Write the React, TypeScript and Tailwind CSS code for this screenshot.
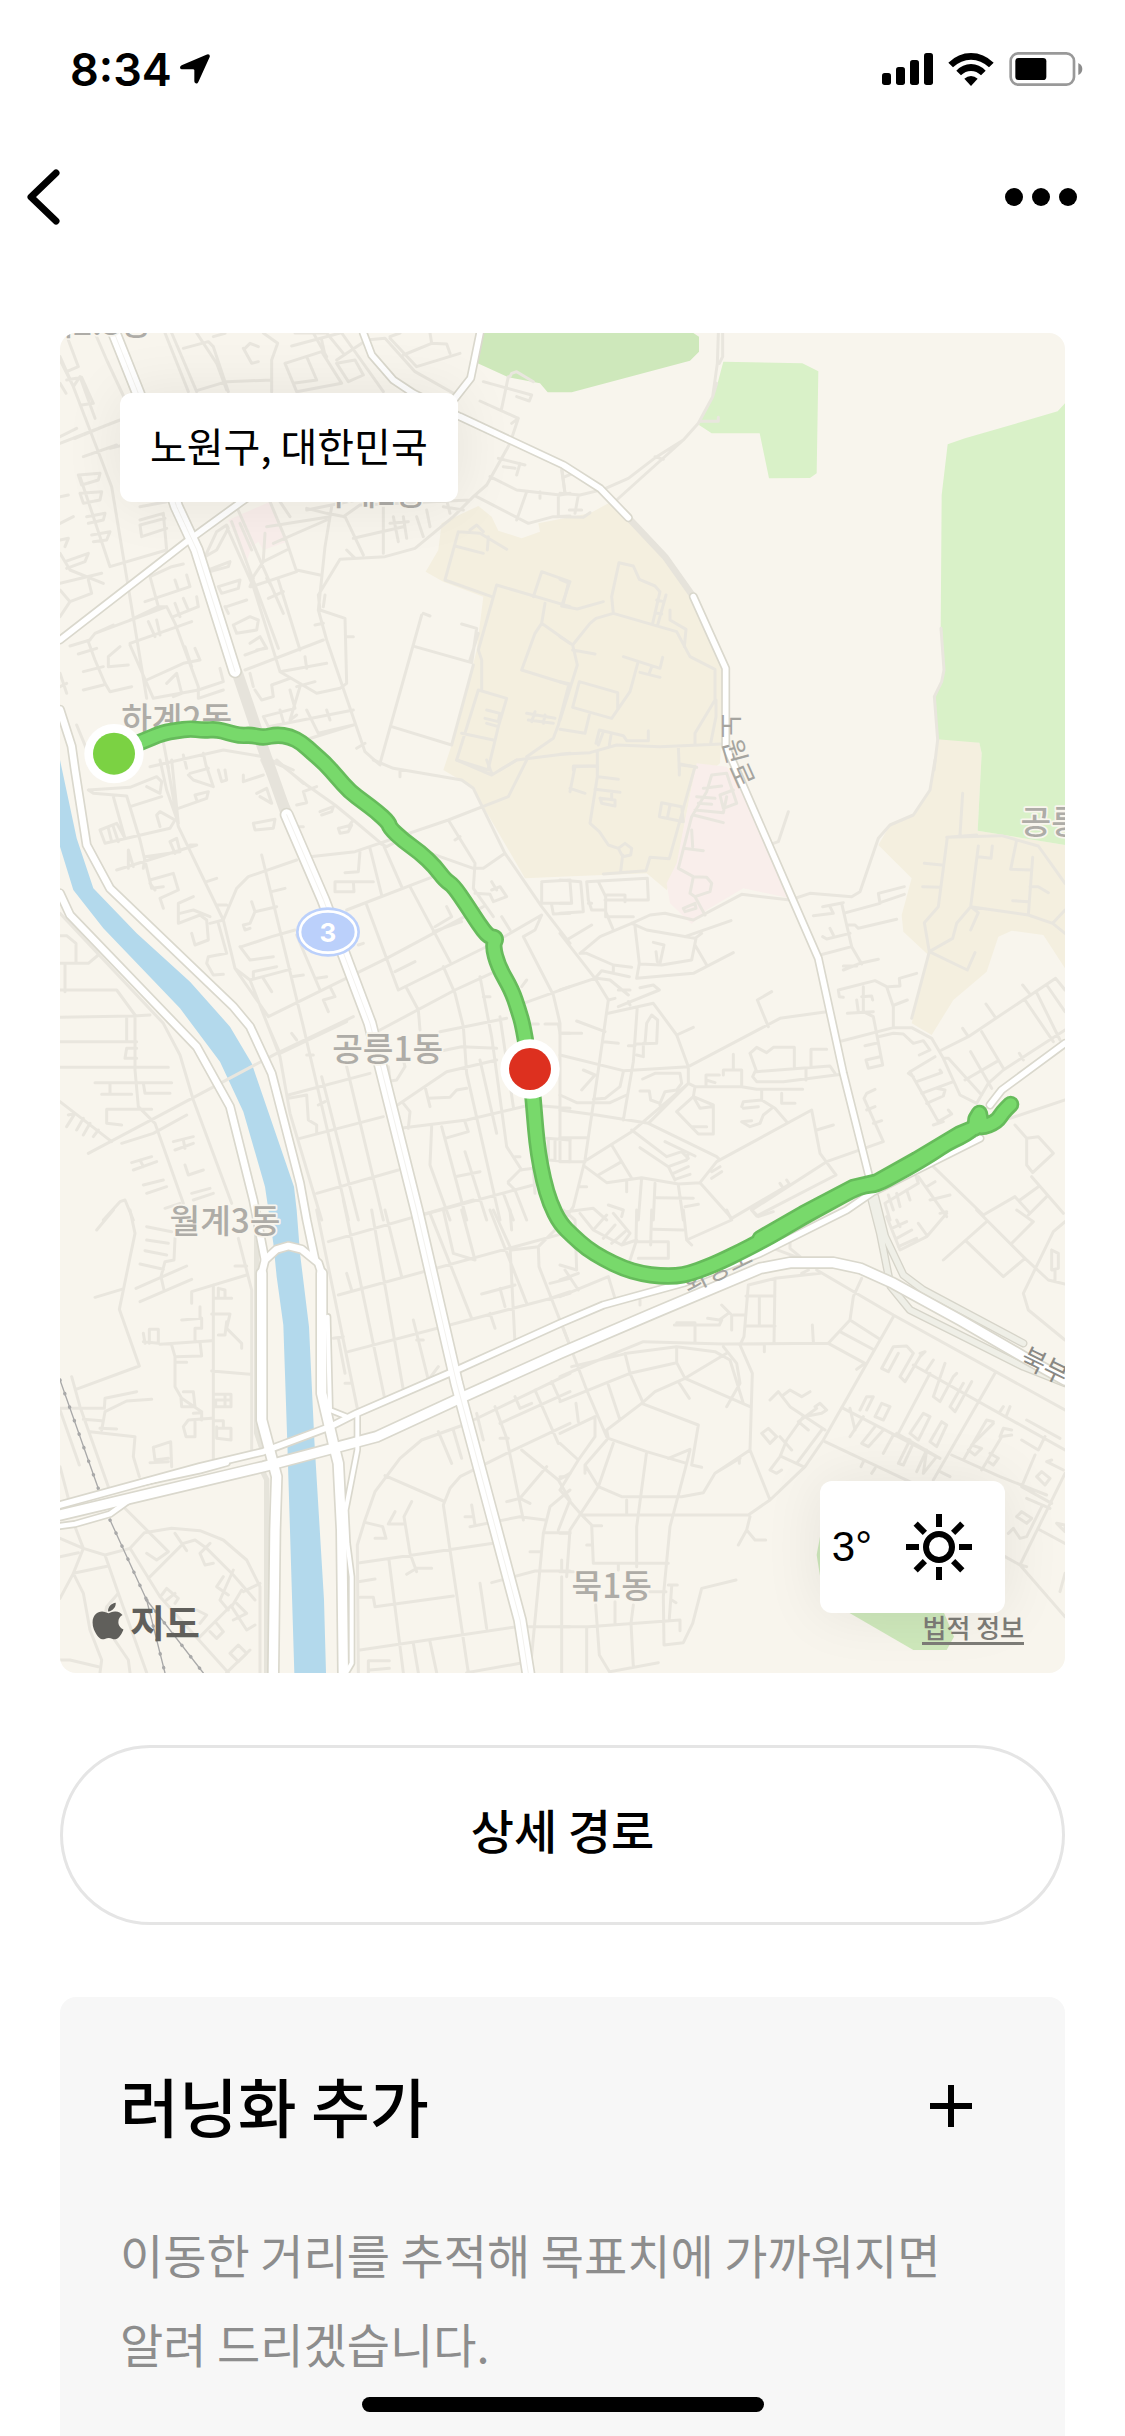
import { FaApple } from "react-icons/fa";

const BLOCKS = [
  {
    id: "hagye",
    x: -30,
    y: -39,
    d: `M30 110L70 200L185 500L290 1135M55 60L85 140L50 155M30 120L70 200L90 170L135 295M30 190L48 220M50 180L95 172L130 250L95 255M135 39L170 120L310 420
    M345 39L415 215M365 39L440 215M400 85L475 65L490 80L535 215M440 39L500 130L530 210M490 50L525 40M440 212L530 185L665 180M640 39L683 70L665 120V215
    M585 85L600 70L625 80M580 85L605 130L625 125M725 78L870 39M790 39L830 110M815 60L825 105M705 130L815 95L875 190L740 215L705 130M770 110L800 180L730 190M735 39L830 39L880 100M860 130L915 120L940 165L895 185L860 130M875 39L1000 215M860 120L905 90L950 60L1005 55L1095 155L1220 225
    M1020 55L1100 140L1230 100M1060 105L1145 70L1190 72L1200 100M1140 39L1145 70M1020 50L1050 39
    M1380 170L1385 160L1400 155L1450 185M1300 185L1445 225L1438 243L1400 230M1375 170L1355 265M1290 243L1405 295L1380 370L1310 495L1270 530L1210 590L1095 685L1005 710L870 718L805 825L810 870L885 895L890 1090L870 1105L800 1120L690 1055M1405 295L1385 310
    M30 370L210 300M30 350L80 325M75 355L160 320M100 410L200 375M180 385L240 370M85 465L150 460L145 480L95 495L85 465M90 520L155 515L150 540L100 550L90 520M90 470L180 740L350 690L340 580L270 600M30 530L55 525M30 610L70 590M30 660L55 655L45 680M270 560L350 545M345 595L270 615L275 650L350 625M110 590L165 580L160 600L115 610M125 645L180 635L170 660L130 665M45 725L115 700L105 725L50 745M30 700L60 750L160 790M30 790L155 760M115 780L125 820L60 845L30 890M60 845L30 810
    M300 770L365 740L400 732M300 770L325 860L240 900M285 845L420 800L410 765M375 780L385 810M325 860L350 860L375 910L445 1100V1135M240 970L425 905M135 940L350 860M115 965L135 940L190 915M60 978L120 960M85 1002L140 985M100 1055L160 1040M115 965L135 1020L165 1090L180 1115L245 1100M175 1040V1010L210 980M175 1040L235 1035M100 1110L160 1095M240 975L310 1135L445 1110M295 905L315 950M320 900L330 945M290 1080L400 1030L450 1020L435 985M405 980L425 1040M350 1090L380 1060L395 1120L370 1130M445 1110L520 1085L510 1045M445 1135L520 1110M370 890L445 860M375 850L390 890M400 835L415 870M440 830L445 860
    M30 1060L50 1120M30 1100L50 1090M80 1215L115 1300M335 1240L355 1345M300 1340L520 1290L640 1310L730 1350M400 1305L410 1345M460 1300L470 1345
    M465 710L500 635L530 615L535 625L500 690L465 710M475 750L540 725L535 740L480 755M530 620L610 800L690 1055M545 605L685 985M560 560L700 880M605 690L570 610M605 800L740 755L710 665L660 545M610 770L640 725L710 690M505 800L570 780L565 805L515 820L505 800M530 860L590 840M525 860L535 880M550 915L600 890L625 900L620 930L560 940L550 915M600 970L630 950L650 985L620 990M610 775L600 800M585 1005L640 985M690 1010L820 960M585 1050L820 960M650 775L665 800M655 835L700 815M685 780L750 990M740 750L810 765M645 640L640 720M650 620L840 590M670 670L830 600M690 545L720 590M770 565L830 580L885 590L940 705M845 560L825 680L805 870L830 960L945 1295L990 1335M820 860L825 825M795 915L820 910M890 950H910M690 1055L830 1030M765 1010L770 1045M740 1100L795 1085M615 1110L635 1140L670 1130L665 1095L720 1075M600 1060L610 1100M720 1110L735 1165L725 1130M750 1100L720 1200L740 1185M640 1190L735 1165M640 1190L655 1220L910 1170M690 1170L700 1205M770 1170L805 1240L910 1215M830 1170L840 1200M765 1260L910 1215M920 1285L945 1270M770 570L920 540M880 590L930 555L1260 540M910 655L1060 620M1000 540V700M890 690L915 715M1030 590L1045 665M1060 590L1070 655M1100 590L1120 650M1020 610L1075 605M1130 570L1140 620M1180 560L1240 570M1190 540L1200 580
    M1320 470L1400 510L1530 525L1560 520M1280 530L1435 610L1510 590L1560 588M1430 515L1400 600M1470 515V535M1345 415L1425 435M1360 440L1395 445M1410 430L1400 465M1525 530V590M1535 440L1545 520
    M1120 880L1140 888M1115 885L990 1330M1095 980L1265 1028L1280 925L1235 912M1270 1035L1205 1275L1025 1220M1285 940L1260 1020
    M1225 635L1290 640L1370 688M1225 635L1185 780L1325 830M1215 678L1300 700M1260 630L1280 615L1300 635M1315 650L1312 690M1340 795L1560 860M1340 795L1285 990L1295 1020V1110M1450 830L1475 755L1560 785M1555 790L1540 850M1485 850L1475 910L1560 970M1475 910L1455 940L1415 1050L1560 1095M1555 1100L1525 1215M1285 1110L1370 1135L1345 1220L1310 1210M1285 1110L1220 1320L1315 1350M1235 1240L1330 1260M1345 1220L1315 1345M1310 1170L1350 1180L1345 1205L1305 1195M1430 1180L1515 1195M1435 1200L1510 1210M1455 1175L1445 1205M1485 1185L1480 1210M1350 1350L1400 1320L1560 1300M1430 1310L1510 1255L1525 1215`,
  },
  {
    id: "nowon",
    x: 1500,
    y: -39,
    d: `M475 39L472 130L458 230L415 310L370 360L170 540M488 39V110L478 130M470 190L458 230M370 360L290 410L205 475L130 508L60 525L0 520M285 410L310 418M420 304H475V292
    M5 450L15 520M15 470L40 460M55 525L45 580M28 570H65M0 590L70 592L90 578
    M0 778L28 790L5 858L52 867L130 845M155 830L177 728L220 738L238 778L285 798L300 815L278 910M155 830L160 880L108 895L90 910L38 975L0 950M160 880L350 935L390 1010L465 1048V1140L405 1240V1270M318 825L293 915M290 840L310 845M285 878L305 882M330 870V900L378 928L373 980M38 990L105 1002M38 975L52 1035L0 1200M190 1010L300 1045L308 1012M240 1057L300 1072M275 1040L268 1060M233 1030L210 1115L155 1195L38 1162L58 1085L173 1118V1165M0 1085L30 1092M88 1185L75 1240L0 1228M468 1140V1190L452 1270M108 1270L118 1230L190 1247L200 1262H265V1232M115 1275L130 1235M148 1275L153 1245M0 1303L90 1298L170 1275L300 1280L485 1272M112 1295V1350M40 1350V1340L112 1338M355 1280L358 1350M360 1332L410 1342
    M1143 925L1152 1050L1145 1085L1123 1130L1133 1260L1122 1350`,
  },
  {
    id: "gongneung-west",
    x: -30,
    y: 1281,
    d: `M115 90L240 82L320 50L335 65L330 100L290 80M115 90L130 100L230 108L270 240L305 385L340 380M190 110L225 235M240 140L335 110M150 210L200 190L225 235M150 210L165 250L360 205L375 180L330 155L320 165L330 200M175 205L185 245M190 200L205 245M350 0L385 200L520 480L555 625L655 770M365 0L385 190M330 0L350 90L385 190M385 145L470 115L475 95L435 105L440 120M420 40L475 25M415 45L430 60L490 80L470 20M505 30L515 65L530 60L525 30
    M200 330L440 255M280 325L285 290L390 275L380 235L360 245L375 280M235 325L235 270L250 320M420 255H440M470 365L500 355M300 360L370 340L385 390L330 415L340 445M300 370L315 390M430 410L385 430V490L450 465L470 480L475 540L435 555L425 520M390 460L430 450L480 470M480 490L520 480M500 435H530M505 490L530 580L475 590L470 610L490 645L520 643M520 480L560 385L595 350L740 300M555 625L600 660L655 800L690 880
    M635 0L705 150M650 0L720 150M665 5L700 20L770 75L855 135L910 180L1005 260M680 0L760 70M580 65L640 45M580 45V65M620 100L650 85L665 130L630 110M610 190L675 178L670 205L615 210L610 190M740 135L770 128L760 95L800 80M745 200H760M810 155L850 140L845 155L815 165M865 205L905 195L895 215L870 220L865 205M910 180L895 200
    M780 290L915 275L1195 180L1375 110L1430 0M930 275L925 335L885 338M855 365H910L912 395H855V365M910 365H970M960 265L995 405M1000 255L1055 380M990 250L1010 260L1080 225M1195 180L1275 310L1270 385L1330 470M1215 240L1230 230M1100 265L1270 325H1300L1365 280M1275 400L1320 403L1330 425L1370 410L1350 380L1325 390M1325 365L1340 390M890 450L1150 350M970 0L1030 25L1235 60L1270 85L1365 280L1475 440L1560 550M1050 30V50M1310 0L1325 40M1220 0L1325 45L1400 0M1475 365L1560 360M1475 370V430L1560 430M1505 435L1510 462L1560 460
    M635 285L760 800L895 1380M575 560L665 530L735 510M605 425L615 455L680 440M615 455L600 490L580 495L585 510L600 505M570 560L600 600L670 590M665 395L705 385M610 635L680 620M600 660L720 628M640 655L665 695M610 635V650M725 650L760 645M655 770L1010 595L1300 440M740 525L810 690M800 655L830 650M840 680L855 710L820 720L835 755M940 550L925 555M950 435L1045 690M1035 635L1095 605M1080 380L1200 605M1150 515L1235 485M1155 500L1205 470L1190 440M1045 690L1320 555L1475 465L1455 510L1420 530L1510 705L1530 790V1200M1355 470L1380 510M1070 685L1105 750L1110 810M990 810L1215 690L1335 635M1180 620L1215 700L1240 800L1250 940L1350 1380M1290 650L1325 830L1370 1160L1415 1230M1300 710H1320M1420 730L1560 680M1430 660L1415 680M1350 770L1390 1040M1170 815L1370 775M1115 885L1235 860L1340 865M1440 792H1465M1485 792H1525L1530 820H1560
    M520 965L680 880L910 770M690 880L890 785M725 820L740 840M770 885H790M655 800L690 890L720 1060L815 1380M715 1005L960 940M815 950L925 1380M890 920L1000 1380M715 1015L770 1005L775 1080L800 1095V1120M805 1035L825 1025M750 1135L1000 1070M800 1300L1045 1230M1010 965L1040 960L1065 920L1060 900M1015 920L1020 960M1035 1040L1190 935L1340 900M1125 980L1140 1040M1135 1015L1200 1012L1220 990L1250 985M1060 1030L1080 1055L1075 1105M1050 1105L1250 1080L1440 1035L1560 1045M1145 1100L1140 1215L1200 1380M1175 1100L1250 1380M1245 1085L1255 1115L1185 1135M1245 1175L1310 1380M1215 1250L1290 1235M1115 1365L1450 1275M1290 900L1340 1120M1375 1265L1410 1230L1450 1225L1455 1300M1375 1270L1395 1290L1430 1380M1490 1135L1560 1140M1495 1140V1200L1560 1205M1515 1140V1200M1395 1190H1410M1360 1300L1390 1380
    M30 460L340 790L390 885L430 1020L545 1330M30 527H50L78 550V605M30 610H115L145 585M45 610V695M30 690H200L255 765M30 772L250 768L300 765M230 770V840M255 770V930L265 1040L315 1090L400 1330M30 845H260M225 895L230 865H260M225 895H260M30 922H355M135 968H365M155 1003H245M180 970V1000M280 970L285 1000H360M30 1025L185 1145M55 1065L75 1060L50 1100M100 1075L80 1110M120 1090L100 1125M145 1110L130 1130M115 1180L520 965M170 1048H305M170 1048V1090L215 1095M215 1150L310 1120L410 1065M370 1145L430 1130M375 1170L430 1150M400 1140L405 1165M245 1208L305 1190M250 1230L320 1205M270 1200L280 1220M405 1215L415 1245L460 1230M280 1275L340 1260M290 1300L350 1280M425 1300L480 1285M430 1320L490 1300M345 1345L390 1330M160 1380L210 1325L225 1320L250 1380`,
  },
  {
    id: "gongneung-east",
    x: 1500,
    y: 1281,
    d: `M40 18H112V50L90 190L118 215L145 255L175 265L195 250L215 265L212 285L188 290L175 265M188 285L182 335M115 50L175 58M105 88L180 97M120 115L165 120V138L125 130L120 115M155 97V118M30 95L45 20M30 85L75 100M130 342L258 332L270 292L328 296L405 20L358 14V45M305 128L365 140L370 185L298 170L305 128M330 135L322 175
    M455 45L500 40L530 130L490 145L480 105L520 90M455 45L440 95L395 170L355 325L400 350L440 352L455 370L450 395L405 410L390 400L400 350M410 110L465 115M430 85L485 78M415 130L455 133M405 150L490 158L500 110M400 165L490 188M370 265L430 272M395 210L398 260M405 410L435 465M370 445L405 430L408 445L375 455L370 445
    M0 360L62 365L70 455L0 460M30 365L35 430H0M80 365L262 355L265 420H135M80 365L85 420L95 450H135L158 505M115 365L137 410V470M140 405H195V425M145 470H220M85 430L95 430
    M0 520L105 655L145 720L115 930L75 1200L40 1340L20 1370M20 540L95 495M60 580L120 530L215 490L270 465L315 460L400 480L545 403L690 420L750 400L875 410L900 395L955 235L990 195L1060 165L1110 90L1125 0M225 500L238 610L230 655L400 640L520 578M215 490L260 510L405 535L425 520M375 530L513 482M408 535L395 600L305 615L240 612M405 555L440 615M280 547L312 555L300 610M288 575L292 605M60 580H80L160 615L215 622M0 690L105 655L125 632L208 650M160 615V635M110 655L150 660L205 705M175 690H210M240 683L280 675L298 690L175 740M210 735L205 725M145 760L280 730L350 825L385 920V970L265 1090M50 783L135 815M130 845L175 850M0 820H65M145 720L165 715M350 825L400 802M232 740L220 905L190 1080M255 850L260 790L275 765L293 780L290 850L230 852M250 850V890L230 885M205 857H225
    M0 885L190 932L385 920L660 775L800 755M625 800L592 720L635 695M0 1005L50 1028H150L200 1005M100 1018L135 1015L180 980L190 935M70 930L105 945L65 990M0 1050L110 1065L265 1090L470 1190L480 1200M240 993H268L272 1020L300 1030L315 995L350 990L365 970L360 940H285L248 957M300 1035L305 1040M385 970L405 980H545L590 988H728M438 975V945H478M438 960L465 968M490 945V930H545V975M520 930V883M570 880L590 862L620 878L640 862H703V920M570 880L590 935L810 918L825 940M585 935L578 950L590 965H670L845 943M753 920V868H800M738 925V960M605 990V1020M545 1040L550 1025L605 1020L645 1045L680 1085M665 1000V1030H705M635 1045L610 1065L600 1090L570 1100L545 1085L575 1082M550 1045L595 1040M350 1055L400 1010L460 1035V1122H415L350 1055M405 980L400 1010L420 1045L455 1040M395 1100H440M80 1200L215 1115L385 970M215 1110L320 1190M240 1163L325 1220L380 1200L385 1180M320 1190L365 1175L385 1195M315 1145L405 1188M325 1220L345 1260M340 1240L385 1220M345 1258L390 1243M0 1133H80M30 1135V1205M0 1205H75M75 1220L140 1268L245 1253L355 1272L420 1268L470 1205L755 1050L780 1180L828 1245L590 1368L575 1350L800 1205L970 1145L912 1015L920 1000L945 988M155 1155L215 1255M115 1245L185 1205M420 1268L515 1375M455 1255L485 1235M455 1235L480 1220M770 1110L820 1095M920 1050L945 1040M940 1090L965 1082M515 1375L685 1275M660 1270L670 1285M680 1260L690 1275M245 1253L235 1380M285 1270L280 1380M290 1313L400 1315M355 1275L370 1380M375 1340L415 1333M200 1265V1295M20 1355L100 1345L140 1380M145 1335L190 1350L185 1370M60 1280H80
    M640 250L655 245L685 155M780 585L875 560L905 612M845 430L875 560M788 440L850 428M760 467L820 460L810 440M858 458L960 430L955 400L1033 380M960 428L1033 403M865 495H885L895 505L1010 478M788 530L800 537L870 520M810 505L820 525M850 630L900 610L955 598M850 618H890
    M835 690L945 662L980 680L1000 740V800M835 690L838 710L850 712M910 680V755M862 760L940 755M905 710L935 708L938 720M985 680L1020 678L1018 655L1070 640M1003 735L1042 720M890 720L895 755M910 755L940 770L968 915L925 925L918 900L960 890M915 857L955 848M845 843L1000 803H1055L1115 835L1150 895L1200 1005L1250 1030M955 830L1000 820L1030 822L1060 850L1090 842L1110 870L1078 885
    M1208 100L1200 225M1250 225L1162 232L1135 440L1093 488L1108 575L1055 775M1160 232L1325 227L1435 258L1515 370M1255 258L1232 440L1255 458L1232 510M1255 290L1293 295L1297 258M1370 240L1352 328L1413 330M1418 292L1405 465M1093 310L1145 315M1088 380L1140 382M1410 380H1435L1465 398M1358 422L1405 425M1232 440L1405 465L1478 490L1515 520M1478 490L1515 450M1232 440L1190 490L1178 535L1108 575L1222 630L1245 578
    M1145 870L1225 830L1487 655L1515 690M1208 805L1225 830M1278 732L1308 775M1388 675L1408 700M1265 815L1330 925M1395 720L1480 845M1430 698L1500 840M1460 675L1515 755M1515 810L1330 930L1285 970L1250 1030M1378 880L1390 900M1232 875L1295 985M1215 960L1310 905M1150 895H1165L1265 1005M1050 935L1125 890M1050 935L1135 1085L1175 1062L1165 1050M1070 965L1145 938L1140 930M1085 1000L1180 965M1100 1030L1150 1008L1155 990L1130 985M1120 1095L1150 1085M1045 940L1060 950
    M1260 1105L1515 1020M1365 1095L1400 1135V1215L1418 1238L1480 1180L1435 1130L1400 1135M1120 1220L1270 1365L1365 1310L1410 1360M1415 1250L1510 1360M1380 1320L1435 1280M1405 1365L1460 1310M975 1330L1075 1270L1065 1240M975 1330L990 1380M985 1305L1000 1350M1010 1300L1020 1340M1040 1290L1050 1320M1075 1250L1160 1370M1100 1280L1125 1265M1110 1320L1170 1305M1140 1360L1160 1355`,
  },
  {
    id: "wolgye",
    x: -30,
    y: 2631,
    d: `M190 0L140 60M240 0L255 70L208 298L268 468L78 538M135 262L215 238M290 50L365 65M290 90L355 100M285 122L350 135M270 162L340 178M375 85L372 150L345 155M258 235L410 168M270 275L425 208M345 155L333 200L342 240M565 85L605 240V720M555 168H590M425 280V245L590 195M490 225V750M505 235L525 240V265L490 265M505 235V265M520 265H545M485 312H540L530 355L575 400V415M505 375H525L530 335M395 330L455 325V355L435 355V395M450 290V325M280 395L325 400V358H298V400M280 370L285 400M330 403L485 392M365 405L375 440V530L395 565L455 605M375 440L455 438L450 395M375 457H410M485 483L600 493M400 545H430L435 590L395 590L393 565M495 553H543V590H497V570H543M525 553V590M415 630L485 625M430 610L455 608V630M415 630L400 650L408 680H435V635M495 632H520V655M500 650V685L543 690V655H500M310 712L362 695L365 770M310 712L315 750L355 745M300 758L355 755
    M65 500L90 590L175 830M30 595H163M100 628L155 632M163 595L165 565L260 545M155 660L165 605L230 573L305 568M150 655L200 657M120 665L255 680L250 740L268 800M30 600L88 765M30 770L55 865
    M215 885L355 1025M30 985L100 1015L165 1035L240 1015L283 968L365 955L450 962L520 990L590 1050L630 1130V1388M75 950L100 1015L70 1090L30 1165M30 1040L85 1028M70 1090L175 1068M165 1035L205 1150L290 1388M240 1015L330 1160L535 1388M295 1105L400 1000L435 990L470 1015L550 1095L615 1170M375 970L410 1022M290 1030L320 1050L355 1025M480 1000L450 1030L465 1065L490 1060M550 1080L510 1170L535 1200M520 1100L500 1130L535 1155M575 1140L545 1190L590 1260L615 1245M560 1180L590 1210L550 1230M580 1145L630 1120M335 1155L350 1135L385 1165L375 1180M350 1170L375 1150M440 1200L470 1215L450 1240M445 1285L545 1185M500 1240L520 1265L500 1285L480 1265M540 1330L565 1305L590 1330L565 1355L540 1330M530 1388L600 1320M70 1090L100 1150L120 1260L155 1350L150 1388M205 1150L170 1190L160 1240L235 1350L240 1388M30 1350H60L145 1370
    M800 0L925 610M835 95L1270 -30M865 255L1560 65M895 425L1560 250M880 -30L1005 570M965 0L1060 540M890 190L905 240M1005 0L1055 200M1140 10L1265 325M1090 330L1135 510L1165 470M1100 390H1120M1180 0L1210 130L1275 150M1235 0L1275 150M1320 0L1430 280M1330 0L1380 110L1395 400M1380 0L1385 60M1295 252L1395 225M1350 235L1365 290M1320 310L1335 355M1385 120L1465 110L1515 60M1465 110L1467 170L1555 395M1500 220L1560 205M1500 265L1560 245M850 385L880 380M865 385L885 490M885 520H905
    M925 1388L922 1005L945 930L975 845L1050 745L1115 690L1240 645L1560 490M1005 797L1180 873M1165 665L1205 760M1210 660L1235 745M1280 610L1300 690M1560 640L1370 730L1230 800L1200 835L1180 885L1255 1388M1085 875L1062 920L1080 1030L1100 1085M1015 942H1062M1015 942L1035 905M945 937L998 950L1008 985H975M930 1058L1330 1000M925 1115L975 1107M930 1162H970L975 1190L1210 1158M1070 1093L1100 1075H1145M1017 1050L1060 1388M930 1320L1400 1250L1560 1250M955 1388V1352H1018M960 1380L1018 1375M1090 1300L1105 1388M1140 1295L1160 1388M1250 1388L1410 1360M1290 1120L1310 1255M1325 1118L1455 1083H1560M1265 885L1275 945M1245 920H1265M1260 950L1410 920L1485 930M1335 590L1370 685L1420 930M1350 640L1560 545M1395 560L1410 595L1445 580M1455 540L1525 700M1505 515L1530 570M1370 875L1410 865L1490 770M1410 865L1440 880M1415 720L1525 810L1560 790M1525 810L1560 870L1525 960M1560 840L1500 890L1480 970L1440 1388M1480 968H1560M1440 1025H1475M1535 1050V1080M1350 685H1375`,
  },
  {
    id: "muk",
    x: 1500,
    y: 2631,
    d: `M10 0L45 30L50 180L0 165M15 180L55 240M0 260L145 200L165 265M0 210L55 190M230 0L228 95L210 150M228 95H325V145H235M275 0L272 105M280 58L370 60M370 0L380 90L395 105M380 90L515 30L500 0M60 10L100 60L185 105L210 70L160 10M100 60L140 15M130 85L165 45M185 105L230 90M155 100L195 65M575 0L595 20L640 5
    M10 355L80 540L140 680M0 500L140 440L250 395L490 402L805 400L870 330L880 260L905 205M240 270V285M35 470L200 430L350 410L465 425L510 450L550 580M0 575L135 520L210 490L350 458L350 415M195 430L210 490L250 580M145 525L180 630M350 458L375 505L570 590M490 410L530 460L540 520L500 590M500 430L375 505L285 545L245 580L140 660L145 685L260 725L380 760L390 720M245 580L415 645L395 765L425 772M355 515L388 565M325 745L390 718M0 670L105 620V680L55 750L0 840M55 635L48 580M260 725L230 950V1070M380 760L330 950L310 1160L312 1305L370 1298L398 1240L425 1135L528 1110M160 700L115 830L30 960L20 1100M75 765L115 830L185 860H365L430 848L465 790L570 720L630 870L735 770L790 690L1000 320M140 690L75 765L75 790M0 700L55 750M0 800H15M0 840L65 915H565L630 870M65 915L95 945L100 1060H325M95 947H125M80 1005H95M200 870V915M570 920L560 960L585 990H617M560 960L535 1005M0 1250H85L360 1230V1262M175 1060V1080M0 970H30M0 1085H40M107 1185L118 1335L150 1388M165 1175V1240M220 1185L213 1240L220 1370M80 1255V1388M150 1385L295 1358M5 1100V1388M270 1145H318M325 1125H352M335 1130L328 1225M335 1170L348 1178
    M540 405L577 490L570 720M540 405L552 380L565 225L645 205L780 190M558 258H645M598 260V345M645 205L642 400M555 348H645M520 315H555M485 285L515 315V360M443 325L478 330L505 310M350 338H405V395M343 345H478L485 330M613 405V425M757 345L760 395M690 85V115L720 140M640 115L720 145M770 180L1000 315L1515 600M725 190L745 180M805 400L915 460L890 478M840 365L943 420M870 330L955 385M850 595L1140 745M795 695L1060 820M910 755L903 770M945 775L935 790M870 595L885 660M538 745V760M605 670L625 655L650 680L630 700L605 670M630 570L655 545L690 590L795 660M670 555L690 540L725 560L750 545M765 590L780 580L800 600L785 610L730 620M770 595L715 635M730 620L680 690L660 740L630 780L650 790L665 780M715 635L745 660M660 680L695 720M665 740L730 770M785 660L710 760M465 790L540 745
    M965 475L1000 410L1040 408L1060 430L1020 500L1035 515L1080 440L1095 425L1080 430M965 475L985 485L1015 430M1060 465L1515 720M1110 490L1015 670M1120 450L1100 480M1155 460L1120 560L1140 575L1180 500L1190 490M1235 515L1185 605L1170 590L1210 520M1305 490L1120 810M1050 670L1090 610L1110 620L1075 690L1050 670M1110 695L1145 635L1160 645L1130 710L1110 695M900 600L920 560L940 560L920 600M945 620L965 580L990 590L970 630L945 620M870 680L910 620L870 680M905 700L945 650M905 700L925 710L970 660M970 730L1000 675L1050 690L1015 760L1030 765L1060 700M1070 785L1100 720L1090 790L1130 740M1010 670L1140 745M1175 735L1320 800L1460 855M1170 800L1140 785M1300 635L1280 630L1210 750M1300 640L1275 665L1235 705L1265 715L1245 735L1225 720M1355 660L1330 655L1320 680L1355 675M1325 680L1265 780M1290 730L1315 745L1300 765L1285 755M1320 605L1330 590M1340 615L1350 590M1400 630L1500 685M1385 690L1435 720L1455 680M1425 735L1385 830L1475 880M1510 780L1460 755L1475 750M1430 800L1445 785L1470 805L1455 825L1430 800M1400 865L1470 895M1515 790L1380 1065M1370 920L1385 905L1415 925L1400 940L1370 920M1345 970L1360 955L1380 985L1400 980L1445 890M1440 960L1515 1000M1335 1040L1380 1065L1515 1220M1380 1065L1400 1070M1515 1090L1500 1145M1490 940L1515 945V965L1490 940
    M980 20L1020 120L1100 80L1160 10M1010 30L1020 50M1010 85L1055 60M995 55L1040 35M1015 110L1070 85M1075 40L1100 75M1250 0L1395 145L1465 210L1515 222M1370 0L1420 35L1355 100M1280 35L1150 150M1220 95L1330 200L1395 145M1515 35L1480 65L1390 250L1405 300L1515 390M1475 120L1495 130V175L1475 180V120M1485 180V215`,
  },
];

const LAND = [
  { id: "campus", color: "#f4efdf", points: "1255,519 1295,551 1315,593 1385,616 1440,596 1435,571 1535,551 1590,541 1645,511 1705,561 1810,671 1900,791 1995,1006 1980,1291 1895,1361 1850,1601 1820,1671 1760,1621 1500,1631 1395,1636 1270,1421 1235,1361 1150,1311 1195,1176 1250,951 1270,791 1150,746 1097,716 1135,651 1145,571" },
  { id: "academy", color: "#f4efdf", points: "2630,1210 2758,1229 2765,1261 2753,1493 3015,1536 3015,1906 2950,1806 2855,1793 2815,1811 2780,1916 2680,2001 2615,2106 2555,2071 2605,1866 2530,1796 2525,1746 2555,1636 2455,1536 2490,1476 2560,1446 2610,1371 2625,1281" },
  { id: "hospital", color: "#f9eeeb", points: "1910,1291 2000,1301 2055,1381 2190,1696 2050,1666 1940,1731 1895,1773 1830,1711 1820,1651 1850,1591 1895,1361" },
  { id: "clinic", color: "#f9eeeb", points: "505,561 630,506 680,626 610,651 595,626 575,641 560,686" },
  { id: "park-north", color: "#cee8bb", points: "1267,0 1253,91 1345,133 1440,151 1463,178 1535,178 1890,83 1917,56 1917,11 1900,0" },
  { id: "park-hill", color: "#d9f1c8", points: "1990,86 2227,91 2275,115 2270,421 2250,435 2127,436 2099,301 1955,301 1917,276 1970,161" },
  { id: "park-east", color: "#d9f1c8", points: "3015,211 2993,235 2715,316 2663,334 2645,486 2642,891 2655,1011 2645,1051 2625,1091 2632,1219 2758,1229 2765,1261 2753,1493 3015,1536" },
  { id: "park-south", color: "#cee8bb", points: "2280,3611 2270,3666 2290,3791 2370,3841 2560,3951 2660,3951 2682,3911 2640,3811 2500,3600" },
];

const RIVER =
  "M0 1200L0 1541L40 1671L130 1786L360 2026L480 2186L550 2336L615 2561L640 2731L650 2831L670 2976L682 3331L703 4020H798L792 3801L763 3321L747 2981L720 2761L710 2631L702 2561L575 2191L510 2081L390 1946L230 1801L100 1666L50 1516L0 1281Z";

const LINK_ROADS =
  "M2432 2590L2460 2700L2492 2860L2550 2931L2720 3016L2890 3101L3015 3150M2445 2590L2475 2710L2530 2826L2590 2871L2890 3031";

const ROADS = [
  { width: 17, d: "M0 921L380 626L545 506L640 440" },
  { width: 17, d: "M910 0L935 66L1000 141L1060 181L1200 251L1510 396L1620 466L1705 554" },
  { width: 17, d: "M1260 0L1232 136L1185 196L1130 240" },
  { width: 17, d: "M1900 791L1997 1006V1240L2020 1290L2190 1681L2275 1876L2350 2221L2430 2541L2445 2570" },
  { width: 20, d: "M0 1130L35 1240L45 1311L80 1536L150 1666L520 2021L570 2081L635 2221L720 2551L740 2661L765 2780" },
  { width: 20, d: "M0 1681L30 1746L410 2141L510 2321L580 2601L615 2781" },
  { width: 12, d: "M803 2951L810 3231L860 3251M892 3241V3351L857 3531L862 3631L875 3731V3991L858 4020" },
  { width: 14, d: "M0 3579L45 3573L150 3543L210 3500M240 3450L420 3412L500 3390" },
  { width: 17, d: "M0 3516L420 3401L610 3356L810 3281L890 3241L1190 3111L1500 2971L1630 2916L1870 2850L2100 2761L2360 2631L2440 2576L2760 2416M2790 2316L2825 2271L3015 2131" },
  { width: 20, d: "M605 2821L615 2781L650 2749L685 2739L725 2749L775 2790L785 2821" },
  { width: 28, d: "M605 2821V3261L650 3431L645 3591L640 4020M785 2821V3181L820 3331L835 3391L845 3591L850 4020" },
  { width: 32, d: "M165 5L235 181L350 521L410 650L525 1015M680 1445L790 1700L930 2071L1070 2631L1190 3150L1300 3561L1380 3861L1405 4020" },
  { width: 28, d: "M0 3546L610 3401L950 3311L1210 3191L1500 3061L1780 2941L2100 2806L2190 2789H2320L2400 2806L2500 2851L2700 2961L2890 3071L3015 3141" },
];

const TRACK = [
  [160, 1261], [245, 1226], [310, 1199], [350, 1193], [390, 1187], [430, 1192], [470, 1189], [505, 1199],
  [540, 1208], [575, 1206], [610, 1214], [650, 1205], [690, 1211], [725, 1229], [760, 1261], [795, 1291],
  [830, 1331], [870, 1376], [910, 1406], [950, 1436], [985, 1468], [990, 1485], [1030, 1523], [1080, 1558],
  [1125, 1601], [1155, 1641], [1180, 1658], [1220, 1716], [1255, 1771], [1285, 1811], [1310, 1814], [1298, 1838],
  [1315, 1901], [1355, 1971], [1375, 2030], [1390, 2081], [1410, 2208], [1420, 2301], [1427, 2390], [1435, 2461],
  [1450, 2541], [1470, 2610], [1500, 2671], [1540, 2710], [1580, 2746], [1630, 2777], [1690, 2806], [1745, 2822],
  [1800, 2829], [1850, 2829], [1890, 2821], [1940, 2803], [1980, 2786], [2040, 2757], [2100, 2726], [2165, 2690],
  [2230, 2651], [2300, 2613], [2380, 2569], [2415, 2557], [2450, 2554], [2510, 2522], [2570, 2489], [2620, 2458],
  [2660, 2431], [2700, 2412], [2735, 2391], [2752, 2370], [2762, 2385], [2810, 2366], [2828, 2338], [2852, 2314],
];

// return leg that doubles the line up near the turning point
const SPUR = "M2745 2385L2748 2358L2758 2341L2765 2375L2700 2402L2570 2480L2450 2547L2380 2563L2230 2642L2100 2717";

// rounds the corners by running each curve between segment midpoints
function smoothPath(points: number[][]) {
  let d = `M${points[0][0]} ${points[0][1]}`;
  for (let i = 1; i < points.length - 1; i++) {
    const [x, y] = points[i];
    const [nx, ny] = points[i + 1];
    d += `Q${x} ${y} ${(x + nx) / 2} ${(y + ny) / 2}`;
  }
  const last = points[points.length - 1];
  return `${d}L${last[0]} ${last[1]}`;
}

const ROUTE = smoothPath(TRACK) + SPUR;

const PLACES = [
  { name: "중계2.3동", x: 65, y: 6 },
  { name: "하계1동", x: 932, y: 516 },
  { name: "하계2동", x: 350, y: 1194 },
  { name: "공릉1동", x: 983, y: 2184 },
  { name: "공릉2동", x: 3048, y: 1502 },
  { name: "월계3동", x: 495, y: 2700 },
  { name: "묵1동", x: 1655, y: 3794 },
];

function RouteMap() {
  return (
    <svg
      viewBox="0 0 3015 4020"
      className="block h-auto w-full"
      role="img"
      aria-label="러닝 경로 지도"
      strokeLinecap="round"
      strokeLinejoin="round"
    >
      <rect width="3015" height="4020" fill="#f8f5ed" />
      {LAND.map((area) => (
        <polygon key={area.id} points={area.points} fill={area.color} />
      ))}
      <path d={RIVER} fill="#b3d9ec" />

      <g fill="none" stroke="#e9e6de" strokeWidth="9">
        {BLOCKS.map((block) => (
          <path key={block.id} d={block.d} transform={`translate(${block.x} ${block.y})`} />
        ))}
        {/* tunnels and underpasses */}
        <path d="M532 1020L600 1220L680 1445" strokeWidth="34" stroke="#e6e3db" />
        <path d="M1705 554L1815 671L1900 791" strokeWidth="20" stroke="#e6e3db" />
        <path d="M590 2700V3300L610 3360M500 3420L600 3400L620 3440V4020" strokeWidth="16" stroke="#e6e4db" />
      </g>

      <g fill="none" stroke="#a9a9a9" strokeWidth="4">
        <path d="M0 3141L120 3481M150 3561L260 3801L315 4020M260 3801L430 4020" />
        <path d="M0 3141L120 3481M150 3561L260 3801L315 4020M260 3801L430 4020" strokeWidth="10" strokeDasharray="1 42" />
      </g>

      <g fill="none">
        <path d={LINK_ROADS} stroke="#d6d4c9" strokeWidth="25" />
        <path d={LINK_ROADS} stroke="#efefe7" strokeWidth="17" />
        {ROADS.map((road) => (
          <path key={road.d} d={road.d} stroke="#dad8cd" strokeWidth={road.width + 10} />
        ))}
        {ROADS.map((road) => (
          <path key={road.d} d={road.d} stroke="#ffffff" strokeWidth={road.width} />
        ))}
        <path
          d="M165 5L235 181L350 521L410 650L525 1015M680 1445L790 1700L930 2071L1070 2631L1190 3150L1300 3561L1380 3861L1405 4020"
          stroke="#f3f2ee"
          strokeWidth="3"
        />
      </g>

      <ellipse cx="804" cy="1797" rx="96" ry="74" fill="#bbd0fb" />
      <ellipse cx="804" cy="1797" rx="84" ry="62" fill="none" stroke="#ffffff" strokeWidth="8" />
      <text x="804" y="1826" textAnchor="middle" fontSize="78" fill="#ffffff" className="font-['Inter',sans-serif] font-bold">
        3
      </text>

      <g
        fontSize="100"
        fill="#aeaca7"
        stroke="#f8f5ed"
        strokeWidth="10"
        paintOrder="stroke"
        textAnchor="middle"
        className="font-medium"
      >
        {PLACES.map((place) => (
          <text key={place.name} x={place.x} y={place.y}>
            {place.name}
          </text>
        ))}
      </g>

      <g fontSize="80" fill="#a5a49f" textAnchor="middle">
        <text transform="translate(1984 1179) rotate(90)">노</text>
        <text transform="translate(1996 1262) rotate(75)">원</text>
        <text transform="translate(2020 1338) rotate(66)">로</text>
        <text transform="translate(1984 2834) rotate(-26)">화랑로</text>
        <text transform="translate(2876 3092) rotate(26)" textAnchor="start" fill="#8a8984">
          북부간선도로
        </text>
      </g>

      <g fill="none">
        <path d={ROUTE} stroke="#66bb5b" strokeWidth="52" />
        <path d={ROUTE} stroke="#78d96b" strokeWidth="36" />
      </g>
      <circle cx="162" cy="1262" r="89" fill="#ffffff" />
      <circle cx="162" cy="1262" r="63" fill="#7bd243" />
      <circle cx="1410" cy="2208" r="89" fill="#ffffff" />
      <circle cx="1410" cy="2208" r="63" fill="#dd301f" />
    </svg>
  );
}

function StatusBar() {
  return (
    <div className="flex h-[138px] items-center justify-between pr-[42px] pl-[70px]">
      <div className="flex items-center gap-2">
        <span className="font-['Inter',sans-serif] text-[45px] leading-none font-semibold">8:34</span>
        <svg viewBox="0 0 90 90" className="size-[30px]">
          <path
            d="M84 1Q91 1 89 9L55 84Q52 90 47 88Q43 87 43 82V49Q43 46 39 46H6Q1 46 0 41Q0 37 5 34L79 2Z"
            fill="black"
          />
        </svg>
      </div>
      <div className="flex items-center gap-[15px]">
        <svg viewBox="0 0 153 96" className="h-8 w-[51px]">
          <rect x="0" y="60" width="27" height="36" rx="8" />
          <rect x="42" y="42" width="27" height="54" rx="8" />
          <rect x="84" y="21" width="27" height="75" rx="8" />
          <rect x="126" y="0" width="27" height="96" rx="8" />
        </svg>
        <svg viewBox="0 0 136 99" className="h-[33px] w-[46px]">
          <path d="M0 29Q30 0 68 0Q106 0 136 29L122 43Q98 20 68 20Q38 20 14 43Z" />
          <path d="M24 53Q43 33 68 33Q93 33 112 53L98 67Q85 54 68 54Q51 54 38 67Z" />
          <path d="M48 77Q57 69 68 69Q79 69 88 77L68 99Z" />
        </svg>
        <svg viewBox="0 0 220 102" className="h-[34px] w-[74px]">
          <rect x="4" y="4" width="190" height="94" rx="23" fill="none" stroke="#999999" strokeWidth="8" />
          <rect x="18" y="18" width="93" height="66" rx="10" />
          <path d="M207 33Q219 39 219 51Q219 63 207 69Z" fill="#8c8c8c" />
        </svg>
      </div>
    </div>
  );
}

function NavBar() {
  return (
    <nav className="flex h-[118px] items-center justify-between pr-12 pl-[26px]">
      <button type="button" aria-label="뒤로">
        <svg viewBox="0 0 34 58" className="h-[58px] w-[34px]">
          <path d="M30 5L5 29L30 53" fill="none" stroke="black" strokeWidth="7" strokeLinecap="round" strokeLinejoin="round" />
        </svg>
      </button>
      <button type="button" aria-label="더 보기" className="flex gap-[9px]">
        <span className="size-[18px] rounded-full bg-black" />
        <span className="size-[18px] rounded-full bg-black" />
        <span className="size-[18px] rounded-full bg-black" />
      </button>
    </nav>
  );
}

function SunIcon() {
  return (
    <svg viewBox="0 0 66 66" className="size-[66px]" fill="none" stroke="black" strokeWidth="6">
      <circle cx="33" cy="33" r="13" />
      {[0, 45, 90, 135, 180, 225, 270, 315].map((angle) => (
        <path key={angle} d="M33 0V13" transform={`rotate(${angle} 33 33)`} />
      ))}
    </svg>
  );
}

export default function App() {
  return (
    <div className="min-h-screen bg-white font-['Noto_Sans_CJK_KR',sans-serif] text-black">
      <StatusBar />
      <NavBar />

      <main className="px-[60px] pt-[77px]">
        <section className="relative overflow-hidden rounded-2xl">
          <RouteMap />
          <p className="absolute top-[60px] left-[60px] rounded-xl bg-white px-[30px] pt-6 pb-7 text-[40px] leading-[57px] shadow-[0_0_60px_rgba(0,0,0,0.08)]">
            노원구, 대한민국
          </p>
          <div className="absolute bottom-[30px] left-8 flex items-center gap-[6px] text-[38px] leading-[44px] font-bold text-[#605f5b]">
            <FaApple className="h-[42px] w-8" />
            <span>지도</span>
          </div>
          <a href="#legal" className="absolute right-[41px] bottom-7 border-b-3 border-[#7d7c77] text-[26px] leading-[30px] font-medium text-[#7d7c77]">
            법적 정보
          </a>
          <div className="absolute right-[60px] bottom-[60px] flex h-[132px] items-center gap-[34px] rounded-xl bg-white pr-[33px] pl-3 shadow-[0_0_60px_rgba(0,0,0,0.08)]">
            <span className="font-['Liberation_Sans',sans-serif] text-[42px] leading-none">3°</span>
            <SunIcon />
          </div>
        </section>

        <button
          type="button"
          className="mt-[72px] flex h-[180px] w-full items-center justify-center rounded-full border-3 border-[#e5e5e5] pb-3 text-[47px] font-medium"
        >
          상세 경로
        </button>

        <section className="mt-[72px] rounded-t-2xl bg-[#f7f7f7] px-[60px] pt-[62px] pb-[60px]">
          <div className="flex items-center justify-between pr-[33px]">
            <h2 className="text-[64px] leading-[90px] font-medium">러닝화 추가</h2>
            <button type="button" aria-label="러닝화 추가" className="pt-1">
              <svg viewBox="0 0 42 42" className="size-[42px]">
                <path d="M21 0V42M0 21H42" stroke="black" strokeWidth="6" />
              </svg>
            </button>
          </div>
          <p className="mt-[60px] text-[47px] leading-[89px] break-keep text-[#8d8d8d]">
            이동한 거리를 추적해 목표치에 가까워지면 알려 드리겠습니다.
          </p>
        </section>
      </main>

      {/* home indicator */}
      <div className="fixed bottom-6 left-1/2 h-[15px] w-[402px] -translate-x-1/2 rounded-full bg-black" />
    </div>
  );
}
